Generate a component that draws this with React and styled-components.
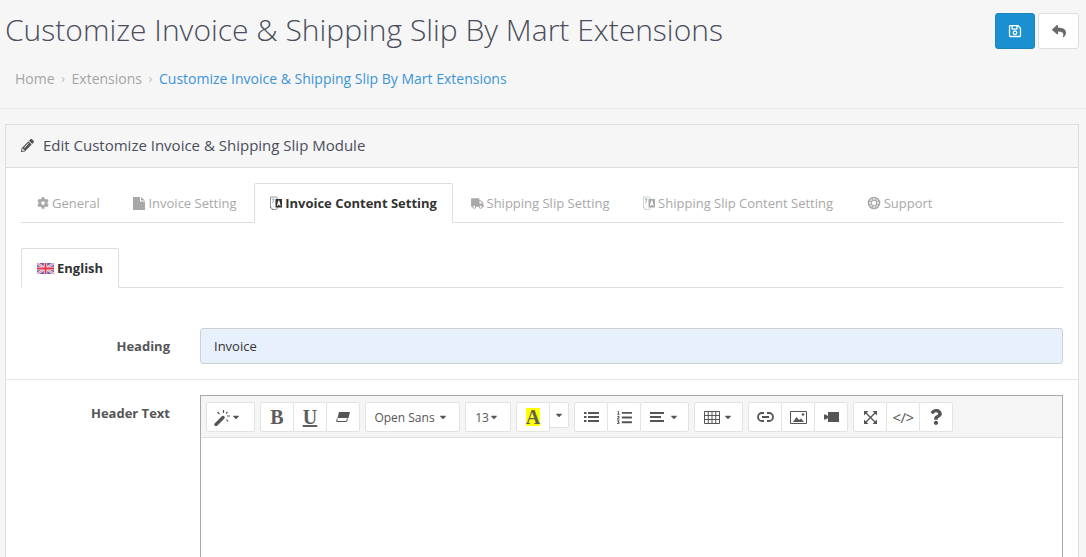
import React from 'react';
import styled, { createGlobalStyle } from 'styled-components';
import { FaCog, FaTruck, FaPencilAlt, FaListOl, FaReply, FaRegSave, FaQuestion, FaCaretDown } from 'react-icons/fa';

const GlobalStyle = createGlobalStyle`
  html, body { margin: 0; padding: 0; height: 557px; overflow: hidden; background: #f6f6f6; }
  body { font-family: "Open Sans", sans-serif; color: #555; }
  * { box-sizing: border-box; }
`;

const Page = styled.div`
  height: 557px;
  overflow: hidden;
`;

const PageHeader = styled.header`
  height: 109px;
  border-bottom: 1px solid #e7e7e7;
  padding: 12px 7px 0 5px;
  display: flex;
  justify-content: space-between;
`;

const Title = styled.h1`
  margin: 0;
  font-size: 30px;
  line-height: 36px;
  font-weight: 300;
  color: #4a4d5c;
`;

const Crumbs = styled.ol`
  list-style: none;
  margin: 21px 0 0 10px;
  padding: 0;
  display: flex;
  align-items: center;
  font-size: 14px;
  line-height: 20px;
  color: #a5a5a5;
`;

const Crumb = styled.li`
  color: ${(p) => (p.$active ? '#3b94d8' : '#a5a5a5')};
`;

const CrumbSep = styled.li`
  width: 17px;
  text-align: center;
  font-size: 12px;
  color: #bbb;
`;

const Actions = styled.div`
  display: flex;
  gap: 3px;
  padding-top: 1px;
`;

const ActionButton = styled.button`
  width: ${(p) => (p.$primary ? 40 : 41)}px;
  height: 36px;
  padding: 0;
  border-radius: 3px;
  border: 1px solid ${(p) => (p.$primary ? '#1a84bf' : '#dedede')};
  background: ${(p) => (p.$primary ? '#1b90d0' : '#fff')};
  color: ${(p) => (p.$primary ? '#fff' : '#6a6a6a')};
  display: flex;
  align-items: center;
  justify-content: center;
  font-size: 14px;
`;

const Panel = styled.section`
  margin: 15px 7px 0 5px;
  border: 1px solid #dedede;
  border-bottom: 0;
  background: #fff;
  height: 433px;
`;

const PanelHeading = styled.div`
  height: 43px;
  background: #f6f6f6;
  border-bottom: 1px solid #dedede;
  display: flex;
  align-items: center;
  gap: 9px;
  padding: 0 0 2px 15px;
  font-size: 15px;
  color: #4a4d5c;
  svg { font-size: 13px; color: #555; }
`;

const PanelBody = styled.div`
  padding: 15px 15px 0;
`;

const Tabs = styled.div`
  display: flex;
  height: 40px;
  border-bottom: 1px solid #dedede;
`;

const Tab = styled.div`
  display: flex;
  align-items: center;
  gap: 3px;
  height: 40px;
  padding: 0 15px;
  margin-right: 1.6px;
  font-size: 13px;
  font-weight: ${(p) => (p.$active ? 700 : 400)};
  color: ${(p) => (p.$active ? '#333' : '#a8a8a8')};
  background: ${(p) => (p.$active ? '#fff' : 'transparent')};
  border: 1px solid ${(p) => (p.$active ? '#dedede' : 'transparent')};
  border-bottom-color: ${(p) => (p.$active ? '#fff' : 'transparent')};
  border-radius: 2px 2px 0 0;
  svg { flex: none; }
`;

const LangTabs = styled(Tabs)`
  margin-top: 25px;
`;

const FormRow = styled.div`
  display: flex;
  margin: 0 -15px;
  padding: ${(p) => p.$pad};
  border-bottom: ${(p) => (p.$line ? '1px solid #e9e9e9' : '0')};
`;

const Label = styled.label`
  width: 164px;
  flex: none;
  text-align: right;
  font-size: 13px;
  font-weight: 700;
  color: #555;
  padding-top: ${(p) => p.$top}px;
`;

const Control = styled.div`
  margin-left: 30px;
  flex: 1;
  margin-right: 15px;
`;

const Input = styled.input`
  width: 100%;
  height: 36px;
  padding: 0 13px;
  border: 1px solid #cfd0d3;
  border-radius: 3px;
  background: #e8f0fb;
  font-family: inherit;
  font-size: 13px;
  color: #333;
`;

const Editor = styled.div`
  border: 1px solid #a9a9a9;
  border-bottom: 0;
  height: 180px;
`;

const Toolbar = styled.div`
  height: 42px;
  background: #f5f5f5;
  border-bottom: 1px solid #dedede;
  padding: 6px 0 0 5px;
  display: flex;
  gap: 5px;
  align-items: flex-start;
`;

const Group = styled.div`
  display: flex;
`;

const ToolButton = styled.div`
  width: ${(p) => p.$w || 34}px;
  height: ${(p) => p.$h || 30}px;
  display: flex;
  align-items: center;
  justify-content: center;
  gap: ${(p) => p.$g || 0}px;
  padding-right: ${(p) => p.$pr || 0}px;
  background: #fff;
  border: 1px solid #e3e3e3;
  margin-left: ${(p) => (p.$first ? 0 : -1)}px;
  border-radius: 2px;
  font-size: 12px;
  color: #555;
  svg { flex: none; }
`;

const Glyph = styled.span`
  font-family: "Liberation Serif", serif;
  font-weight: 700;
  font-size: 20px;
  line-height: 18px;
  color: #5d5d5d;
  text-decoration: ${(p) => (p.$under ? 'underline' : 'none')};
  text-decoration-thickness: 1.5px;
  background: ${(p) => (p.$mark ? '#ffff00' : 'transparent')};
`;

const CodeGlyph = styled.span`
  font-size: 15px;
  letter-spacing: -0.5px;
  color: #555;
`;

const Caret = styled(FaCaretDown)`
  font-size: 10px;
  color: #555;
`;

const Icon = ({ w, h, children }) => (
  <svg width={w} height={h} viewBox={`0 0 ${w} ${h}`} aria-hidden="true">{children}</svg>
);

const FileIcon = () => (
  <Icon w={12} h={13}>
    <path d="M0 0h7v4.500h5V13H0zM8 0l4 3.500H8z" fill="currentColor" />
  </Icon>
);

const LanguageIcon = () => (
  <Icon w={12} h={14}>
    <path d="M.5 1h6l1 2v9l-1 1.500H2V12H.5z" fill="none" stroke="currentColor" strokeOpacity=".5" />
    <path d="M2 3h2.500M3.200 3v2M2 7l2-2" fill="none" stroke="#6f9fc4" strokeWidth=".8" />
    <path d="M5.500 3H12v8.500H5.500z" fill="currentColor" />
    <path d="M8.300 4.600 6.900 9.800h1.100l.3-1.100h1l.3 1.100h1.100L9.300 4.600z" fill="#fff" />
  </Icon>
);

const SupportIcon = () => (
  <Icon w={14} h={14}>
    <circle cx="7" cy="7" r="5.500" fill="none" stroke="currentColor" strokeWidth="1.600" />
    <circle cx="7" cy="7" r="2.800" fill="none" stroke="currentColor" strokeWidth="1.200" />
    <path d="M5.300 1.500v3M8.700 1.500v3M5.300 9.500v3M8.700 9.500v3M1.500 5.300h3M1.500 8.700h3M9.500 5.300h3M9.500 8.700h3" stroke="currentColor" strokeWidth="1" />
  </Icon>
);

const UkFlag = () => (
  <Icon w={17} h={11}>
    <rect width="17" height="11" fill="#5561b0" />
    <path d="M0 0l17 11M17 0L0 11" stroke="#eadfe8" strokeWidth="2.400" />
    <path d="M0 0l17 11M17 0L0 11" stroke="#ee6a7c" strokeWidth=".8" />
    <path d="M8.500 0v11M0 5.500h17" stroke="#f3e6ec" strokeWidth="3.400" />
    <path d="M8.500 0v11M0 5.500h17" stroke="#e8344a" strokeWidth="1.800" />
  </Icon>
);

const WandIcon = () => (
  <Icon w={16} h={17}>
    <path d="M2 15.500 9 8.500" stroke="currentColor" strokeWidth="3.400" strokeLinecap="round" />
    <path d="M9.500 1v3M3.500 3l2 2M12.500 10.500l1.500 2M13 7h3M13.500 3l-1.500 1.500" stroke="currentColor" strokeWidth="1.200" fill="none" />
  </Icon>
);

const EraserIcon = () => (
  <Icon w={14} h={10}>
    <path d="M3 0h11l-1.500 6H1.500z" fill="currentColor" />
    <path d="M1.300 6.500.6 9.500h10l.9-3" fill="none" stroke="currentColor" />
  </Icon>
);

const BulletsIcon = () => (
  <Icon w={15} h={12}>
    <path d="M0 1h2.500v2H0zM0 5h2.500v2H0zM0 9h2.500v2H0zM4 1h11v2H4zM4 5h11v2H4zM4 9h11v2H4z" fill="currentColor" />
  </Icon>
);

const AlignIcon = () => (
  <Icon w={14} h={10}>
    <path d="M0 0h14v2H0zM0 4h11v2H0zM0 8h14v2H0z" fill="currentColor" />
  </Icon>
);

const TableIcon = () => (
  <Icon w={16} h={13}>
    <path d="M.5.500h15v12H.5zM.5 4.500h15M.5 8.500h15M4.250.500v12M8 .500v12M11.750.500v12" fill="none" stroke="currentColor" />
  </Icon>
);

const LinkIcon = () => (
  <Icon w={17} h={10}>
    <path d="M7 1H5a4 4 0 0 0 0 8h2M10 1h2a4 4 0 0 1 0 8h-2M5 5h7" fill="none" stroke="currentColor" strokeWidth="1.800" />
  </Icon>
);

const ImageIcon = () => (
  <Icon w={17} h={13}>
    <path d="M.5.500h16v12H.5z" fill="none" stroke="currentColor" />
    <path d="M3 11l3.500-5 2.500 3 2-1.500 3 3.500z" fill="currentColor" />
    <circle cx="13" cy="3.500" r="1.300" fill="currentColor" />
  </Icon>
);

const VideoIcon = () => (
  <Icon w={15} h={10}>
    <path d="M4 0h11v10H4zM0 2.500h1.500L4 4v2L1.500 7.500H0z" fill="currentColor" />
  </Icon>
);

const ExpandIcon = () => (
  <Icon w={13} h={13}>
    <path d="M1.500 1.500l10 10M11.500 1.500l-10 10" stroke="currentColor" strokeWidth="1.400" />
    <path d="M0 0h4.500L0 4.500zM13 0v4.500L8.500 0zM0 13V8.500L4.500 13zM13 13H8.500L13 8.500z" fill="currentColor" />
  </Icon>
);

export default function App() {
  return (
    <Page>
      <GlobalStyle />
      <PageHeader>
        <div>
          <Title>Customize Invoice &amp; Shipping Slip By Mart Extensions</Title>
          <Crumbs>
            <Crumb>Home</Crumb>
            <CrumbSep>›</CrumbSep>
            <Crumb>Extensions</Crumb>
            <CrumbSep>›</CrumbSep>
            <Crumb $active>Customize Invoice &amp; Shipping Slip By Mart Extensions</Crumb>
          </Crumbs>
        </div>
        <Actions>
          <ActionButton $primary><FaRegSave /></ActionButton>
          <ActionButton><FaReply /></ActionButton>
        </Actions>
      </PageHeader>
      <Panel>
        <PanelHeading><FaPencilAlt /> Edit Customize Invoice &amp; Shipping Slip Module</PanelHeading>
        <PanelBody>
          <Tabs>
            <Tab><FaCog size={12} /> General</Tab>
            <Tab><FileIcon /> Invoice Setting</Tab>
            <Tab $active><LanguageIcon /> Invoice Content Setting</Tab>
            <Tab><FaTruck size={13} /> Shipping Slip Setting</Tab>
            <Tab><LanguageIcon /> Shipping Slip Content Setting</Tab>
            <Tab><SupportIcon /> Support</Tab>
          </Tabs>
          <LangTabs>
            <Tab $active><UkFlag /> English</Tab>
          </LangTabs>
          <FormRow $pad="40px 0 15px" $line>
            <Label $top={9}>Heading</Label>
            <Control><Input defaultValue="Invoice" /></Control>
          </FormRow>
          <FormRow $pad="15px 0 0">
            <Label $top={9}>Header Text</Label>
            <Control>
              <Editor>
                <Toolbar>
                  <Group>
                    <ToolButton $first $w={49} $pr={6} $g={1}><WandIcon /><Caret /></ToolButton>
                  </Group>
                  <Group>
                    <ToolButton $first><Glyph>B</Glyph></ToolButton>
                    <ToolButton><Glyph $under>U</Glyph></ToolButton>
                    <ToolButton><EraserIcon /></ToolButton>
                  </Group>
                  <Group>
                    <ToolButton $first $w={95} $pr={3} $g={3}>Open Sans <Caret /></ToolButton>
                  </Group>
                  <Group>
                    <ToolButton $first $w={46} $pr={2}>13<Caret /></ToolButton>
                  </Group>
                  <Group>
                    <ToolButton $first><Glyph $mark>A</Glyph></ToolButton>
                    <ToolButton $w={20} $h={26}><Caret /></ToolButton>
                  </Group>
                  <Group>
                    <ToolButton $first><BulletsIcon /></ToolButton>
                    <ToolButton><FaListOl size={15} /></ToolButton>
                    <ToolButton $w={49} $g={5}><AlignIcon /><Caret /></ToolButton>
                  </Group>
                  <Group>
                    <ToolButton $first $w={49} $g={3}><TableIcon /><Caret /></ToolButton>
                  </Group>
                  <Group>
                    <ToolButton $first><LinkIcon /></ToolButton>
                    <ToolButton><ImageIcon /></ToolButton>
                    <ToolButton><VideoIcon /></ToolButton>
                  </Group>
                  <Group>
                    <ToolButton $first><ExpandIcon /></ToolButton>
                    <ToolButton><CodeGlyph>&lt;/&gt;</CodeGlyph></ToolButton>
                    <ToolButton><FaQuestion size={16} /></ToolButton>
                  </Group>
                </Toolbar>
              </Editor>
            </Control>
          </FormRow>
        </PanelBody>
      </Panel>
    </Page>
  );
}
